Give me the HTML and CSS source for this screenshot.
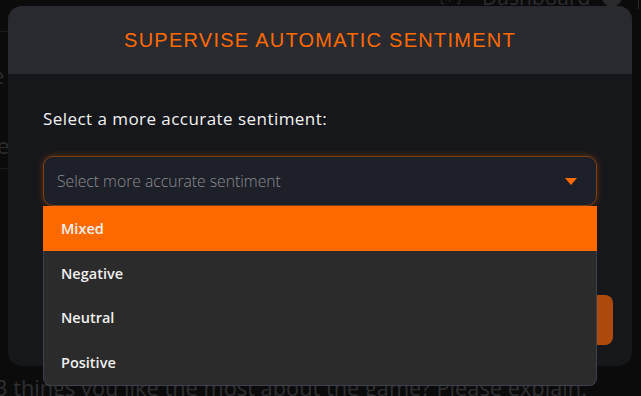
FILE: index.html
```html
<!DOCTYPE html>
<html lang="en">
<head>
<meta charset="utf-8">
<title>Supervise Automatic Sentiment</title>
<link rel="stylesheet" href="styles.css">
</head>
<body>
<div class="page">
  <div class="topbar">
    <span class="tb-icon">[·7·]</span>
    <span class="tb-link">Dashboard</span>
    <span class="tb-avatar"></span>
    <span class="tb-divider"></span>
  </div>
  <div class="side">
    <div class="side-line"></div>
    <div class="side-text side-e">e</div>
    <div class="side-text side-ve">ve</div>
    <div class="side-line"></div>
  </div>
  <div class="question">3 things you like the most about the game? Please explain.</div>
</div>

<div class="modal">
  <div class="modal-header">
    <h2 class="modal-title">SUPERVISE AUTOMATIC SENTIMENT</h2>
  </div>
  <div class="modal-body">
    <div class="field-label">Select a more accurate sentiment:</div>
    <div class="select-wrap">
      <div class="select-box">
        <span class="placeholder">Select more accurate sentiment</span>
        <svg class="caret" width="12" height="7" viewBox="0 0 12 7"><path d="M0 0H12L6 7Z" fill="#ff6a00"/></svg>
      </div>
      <ul class="options">
        <li class="option active">Mixed</li>
        <li class="option">Negative</li>
        <li class="option">Neutral</li>
        <li class="option">Positive</li>
      </ul>
    </div>
    <div class="modal-footer">
      <button class="btn-submit">Submit</button>
    </div>
  </div>
</div>
</body>
</html>
```

FILE: styles.css
```css
* { box-sizing: border-box; }

html, body {
  margin: 0;
  padding: 0;
  width: 641px;
  height: 396px;
  overflow: hidden;
  background: #0b0b0c;
  font-family: "Open Sans", "Noto Sans", sans-serif;
}

.page {
  position: relative;
  width: 641px;
  height: 396px;
  overflow: hidden;
}

.topbar {
  display: flex;
  align-items: center;
  height: 16px;
  margin-top: -11px;
  padding-left: 440px;
  color: #2c2c2e;
  font-size: 21px;
}
.tb-icon { font-size: 12px; width: 42px; }
.tb-link { width: 120px; }
.tb-avatar {
  width: 20px; height: 20px; border-radius: 50%;
  background: #2a2a2c;
}
.tb-divider {
  margin-left: 16px;
  width: 1px; height: 24px; background: #2a2a2c;
}

.side {
  display: flex;
  flex-direction: column;
  margin-top: 26px;
  width: 60px;
}
.side-line { height: 1px; background: #1c1c1e; }
.side-text {
  color: #2c2c2e;
  font-size: 22px;
  line-height: 26px;
}
.side-e { margin-top: 30px; margin-left: -8px; }
.side-ve { margin-top: 44px; margin-bottom: 10px; margin-left: -14px; }

.question {
  margin-top: 205px;
  margin-left: -5px;
  white-space: nowrap;
  color: #2f2f31;
  font-size: 21.8px;
  line-height: 28px;
}

.modal {
  position: absolute;
  left: 8px;
  top: 6px;
  width: 624px;
  height: 360px;
  display: flex;
  flex-direction: column;
  border-radius: 14px;
  background: #16171b;
}

.modal-header {
  height: 68px;
  display: flex;
  align-items: center;
  justify-content: center;
  background: #292a2f;
  border-radius: 14px 14px 0 0;
}
.modal-title {
  margin: 0;
  color: #ff6a00;
  font-family: "Liberation Sans", Arial, sans-serif;
  font-weight: 400;
  font-size: 20px;
  letter-spacing: 1.25px;
}

.modal-body {
  flex: 1;
  display: flex;
  flex-direction: column;
  padding: 33px 35px 0 35px;
}

.field-label {
  color: #f2f2f2;
  font-size: 17px;
  font-weight: 500;
  letter-spacing: 0.45px;
  line-height: 24px;
}

.select-wrap {
  position: relative;
  margin-top: 25px;
}

.select-box {
  height: 50px;
  display: flex;
  align-items: center;
  justify-content: space-between;
  padding: 0 19px 0 13px;
  background: #1e2029;
  border: 1px solid #7e3e12;
  border-radius: 10px;
  box-shadow: 0 0 6px rgba(255, 106, 0, 0.35);
}
.placeholder {
  color: #8b8c90;
  font-size: 15.7px;
  font-weight: 300;
}
.caret { display: block; }

.options {
  position: absolute;
  left: 0;
  right: 0;
  top: 50px;
  margin: 0;
  padding: 0;
  list-style: none;
  background: #2b2b2b;
  border: 1px solid #3b404c;
  border-top: none;
  border-radius: 0 0 8px 8px;
  z-index: 2;
}
.option {
  height: 44.5px;
  display: flex;
  align-items: center;
  padding-left: 17px;
  color: #f0f0f0;
  font-size: 14.5px;
  font-weight: 600;
}
.option.active {
  background: #ff6a00;
  margin: 0 -1px;
  padding-left: 18px;
  height: 45px;
}

.modal-footer {
  display: flex;
  justify-content: flex-end;
  margin-top: 89px;
  margin-right: -16px;
}
.btn-submit {
  height: 50px;
  width: 120px;
  border: none;
  border-radius: 8px;
  background: #ae4b0c;
  color: #e8e8e8;
  font-size: 16px;
  font-family: inherit;
}
```
